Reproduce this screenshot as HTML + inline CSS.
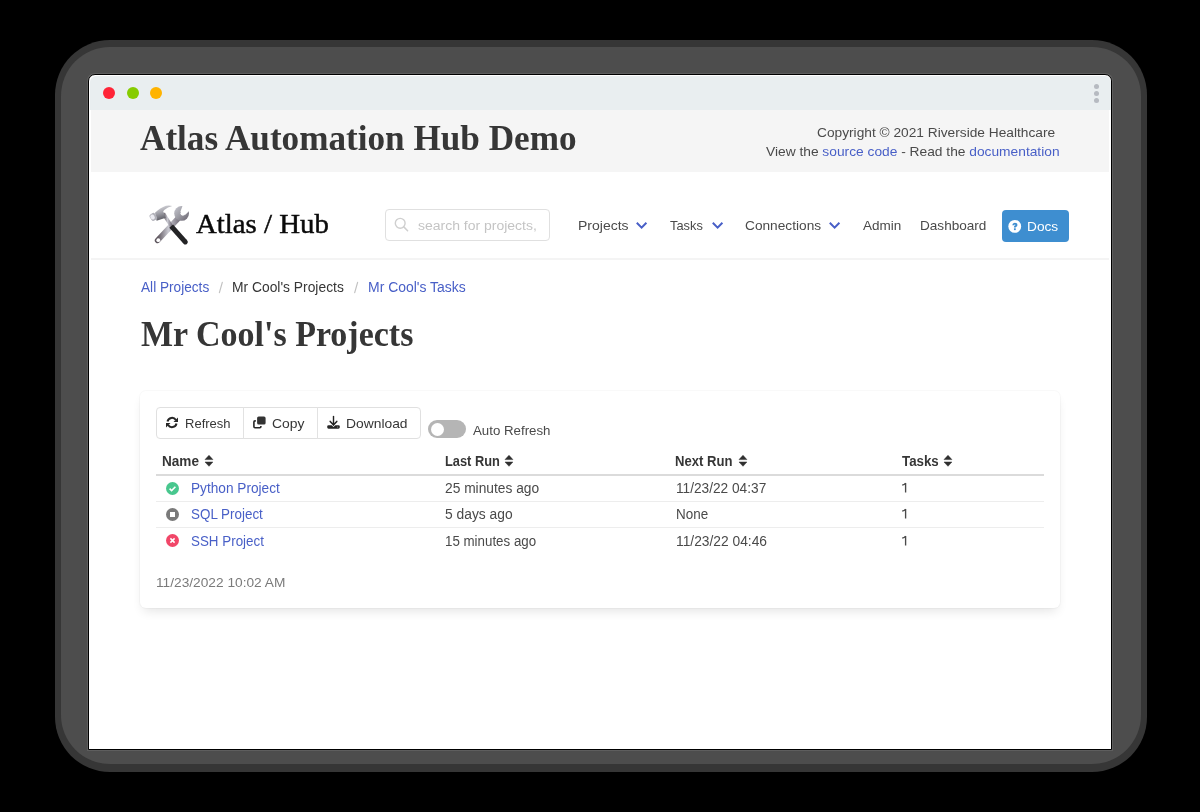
<!DOCTYPE html>
<html><head><meta charset="utf-8">
<style>
*{box-sizing:border-box;margin:0;padding:0}
html,body{width:1200px;height:812px;background:#000;overflow:hidden;font-family:"Liberation Sans",sans-serif;color:#4a4a4a}
.t{position:absolute;white-space:nowrap;transform-origin:0 0}
.b{position:absolute}
a{color:#485fc7;text-decoration:none}
#shadow{position:absolute;left:55px;top:40px;width:1092px;height:732px;border-radius:55px;background:#363636}
#shadow2{position:absolute;left:61px;top:47px;width:1080px;height:717px;border-radius:49px;background:#4d4d4d}
#win{position:absolute;left:88px;top:74px;width:1024px;height:676px;border:1px solid #000;border-radius:7px 7px 0 0;background:#fff;overflow:hidden;box-shadow:0 0 0 1px #5e5e5e}
#titlebar{position:absolute;left:1px;top:1px;width:1021px;height:34px;background:#e9eef0;border-radius:6px 6px 0 0}
.dot{position:absolute;width:12px;height:12px;border-radius:50%}
.vdot{position:absolute;width:5px;height:5px;border-radius:50%;background:#b6bac1;left:1004px}
#hdr{position:absolute;left:2px;top:35px;width:1018px;height:62px;background:#f5f5f5}
</style></head>
<body>
<div id="shadow"></div><div id="shadow2"></div>
<div id="win">
  <div id="titlebar">
    <div class="dot" style="left:13px;top:11px;background:#ff2437"></div>
    <div class="dot" style="left:36.5px;top:11px;background:#86cc00"></div>
    <div class="dot" style="left:60.3px;top:11px;background:#ffb300"></div>
    <div class="vdot" style="top:8px"></div>
    <div class="vdot" style="top:15px"></div>
    <div class="vdot" style="top:22px"></div>
  </div>
  <div id="hdr"></div>
</div>

<!-- logo emoji -->
<svg id="emoji" class="b" style="left:148px;top:202px" width="44" height="44" viewBox="0 0 44 44">
<defs>
<linearGradient id="gm" x1="0" y1="0" x2="0.3" y2="1"><stop offset="0" stop-color="#e2e2e6"/><stop offset=".5" stop-color="#a4a4ac"/><stop offset="1" stop-color="#585860"/></linearGradient>
<linearGradient id="gw" x1="0" y1="0" x2="1" y2="1"><stop offset="0" stop-color="#c8c8d0"/><stop offset=".5" stop-color="#9c9ca4"/><stop offset="1" stop-color="#66606c"/></linearGradient>
<linearGradient id="gh" x1="0" y1="0" x2="1" y2="0"><stop offset="0" stop-color="#5e565e"/><stop offset=".5" stop-color="#c8c8d0"/><stop offset="1" stop-color="#7a7480"/></linearGradient>
<mask id="jaw"><rect width="44" height="44" fill="#fff"/><path d="M32.4 9.8 L35.2 2 L44 6 L37.4 12.8 Z" fill="#000"/><circle cx="34.9" cy="11.3" r="2.4" fill="#000"/></mask>
</defs>
<g mask="url(#jaw)">
<path d="M9.6 38.4 L31 15.5" stroke="url(#gh)" stroke-width="5.6" stroke-linecap="round"/>
<circle cx="33.6" cy="11.4" r="7.4" fill="url(#gw)"/>
</g>
<circle cx="10.3" cy="38.2" r="1.9" fill="#fff"/>
<path d="M15.4 11.5 L23.6 24.6" stroke="url(#gh)" stroke-width="3.6"/>
<path d="M23.2 24.1 L37.2 39.8" stroke="#232325" stroke-width="5"/>
<path d="M37.2 39.8 L37.3 39.9" stroke="#232325" stroke-width="5" stroke-linecap="round"/>
<path d="M7 10.8 Q12 5.6 18 3.7 Q21.5 2.9 24.2 4.1 Q19.6 5.3 16.6 7.8 L15.2 9.2 L17.8 15.8 L8.6 18.8 Z" fill="url(#gm)"/>
<g transform="rotate(-33 5.3 14.9)"><rect x="2.2" y="11.2" width="6.2" height="7.4" rx="2" fill="#b0b0b8"/><ellipse cx="4.6" cy="14.6" rx="2.1" ry="2.6" fill="#ececf2"/></g>
</svg>

<div id="search" class="b" style="left:385px;top:209px;width:165px;height:32px;border:1px solid #e0e0e0;border-radius:4px"></div>
<svg class="b" style="left:394px;top:217px" width="16" height="16" viewBox="0 0 16 16"><circle cx="6.2" cy="6.3" r="4.9" fill="none" stroke="#cfcfcf" stroke-width="1.4"/><path d="M9.8 9.9 L13.6 13.7" stroke="#cfcfcf" stroke-width="1.5" stroke-linecap="round"/></svg>

<svg class="b" style="left:636px;top:222px" width="12" height="8" viewBox="0 0 12 8"><path d="M1.5 1.5 L5.6 5.6 L9.7 1.5" fill="none" stroke="#485fc7" stroke-width="2" stroke-linecap="square"/></svg>
<svg class="b" style="left:712px;top:222px" width="12" height="8" viewBox="0 0 12 8"><path d="M1.5 1.5 L5.6 5.6 L9.7 1.5" fill="none" stroke="#485fc7" stroke-width="2" stroke-linecap="square"/></svg>
<svg class="b" style="left:829px;top:222px" width="12" height="8" viewBox="0 0 12 8"><path d="M1.5 1.5 L5.6 5.6 L9.7 1.5" fill="none" stroke="#485fc7" stroke-width="2" stroke-linecap="square"/></svg>

<div id="docs" class="b" style="left:1002px;top:210px;width:67px;height:32px;background:#3e8ed0;border-radius:4px"></div>
<svg class="b" style="left:1008px;top:220px" width="14" height="14" viewBox="0 0 14 14"><circle cx="6.75" cy="6.4" r="6.4" fill="#fff"/><path d="M5.2 5.3 Q5.3 3.6 6.85 3.6 Q8.5 3.6 8.5 4.9 Q8.5 5.7 7.6 6.1 Q6.85 6.5 6.85 7.4" fill="none" stroke="#3e8ed0" stroke-width="1.9"/><rect x="5.95" y="8.3" width="1.8" height="1.8" fill="#3e8ed0"/></svg>

<div id="navline" class="b" style="left:91px;top:258px;width:1018px;height:2px;background:#f4f4f4"></div>

<div id="card" class="b" style="left:140px;top:391px;width:920px;height:217px;background:#fff;border-radius:6px;box-shadow:0 6px 11px -3px rgba(10,10,10,.11),0 0 0 1px rgba(10,10,10,.025)"></div>

<!-- button group -->
<div class="b" style="left:156px;top:407px;width:265px;height:32px;border:1px solid #e0e0e0;border-radius:4px"></div>
<div class="b" style="left:243px;top:407px;width:1px;height:32px;background:#e2e2e2"></div>
<div class="b" style="left:317px;top:407px;width:1px;height:32px;background:#e2e2e2"></div>

<!-- toggle -->
<div class="b" style="left:428px;top:420px;width:38px;height:18px;border-radius:9px;background:#b5b5b5"></div>
<div class="b" style="left:430.5px;top:422.5px;width:13px;height:13px;border-radius:50%;background:#fff"></div>

<!-- table lines -->
<div class="b" style="left:156px;top:474px;width:888px;height:2px;background:#dbdbdb"></div>
<div class="b" style="left:156px;top:501px;width:888px;height:1px;background:#ededed"></div>
<div class="b" style="left:156px;top:527px;width:888px;height:1px;background:#ededed"></div>

<!-- status icons -->
<svg class="b" style="left:165px;top:481px" width="15" height="15" viewBox="0 0 15 15"><circle cx="7.5" cy="7.5" r="6.5" fill="#48c78e"/><path d="M4.6 7.7 L6.6 9.6 L10.4 5.8" fill="none" stroke="#fff" stroke-width="1.6"/></svg>
<svg class="b" style="left:165px;top:507px" width="15" height="15" viewBox="0 0 15 15"><circle cx="7.5" cy="7.5" r="6.5" fill="#7a7a7a"/><rect x="5" y="5" width="5" height="5" fill="#fff"/></svg>
<svg class="b" style="left:165px;top:533px" width="15" height="15" viewBox="0 0 15 15"><circle cx="7.5" cy="7.5" r="6.5" fill="#f14668"/><path d="M5.4 5.4 L9.6 9.6 M9.6 5.4 L5.4 9.6" stroke="#fff" stroke-width="1.5"/></svg>


<!-- breadcrumb separators -->
<svg class="b" style="left:214px;top:278px" width="14" height="18" viewBox="0 0 14 18"><path d="M8.3 4.3 L5.4 14.7" stroke="#c2c2c2" stroke-width="1.2" stroke-linecap="round"/></svg>
<svg class="b" style="left:350px;top:278px" width="14" height="18" viewBox="0 0 14 18"><path d="M7.6 4.3 L4.7 14.7" stroke="#c2c2c2" stroke-width="1.2" stroke-linecap="round"/></svg>

<!-- button icons -->
<svg class="b" style="left:164px;top:415px" width="16" height="16" viewBox="0 0 16 16"><g fill="none" stroke="#262626" stroke-width="2"><path d="M3.5 6.5 A4.6 4.6 0 0 1 11.9 5.0"/><path d="M12.5 8.5 A4.6 4.6 0 0 1 4.1 10.0"/></g><path d="M14 2.6 V7.1 H9.5 Z" fill="#262626"/><path d="M2 7.9 H6.5 L2 12.4 Z" fill="#262626"/></svg>
<svg class="b" style="left:251px;top:414px" width="16" height="16" viewBox="0 0 16 16"><rect x="6.1" y="2.4" width="8.5" height="8.2" rx="1.6" fill="#333"/><path d="M4.8 6.9 H4 Q2.9 6.9 2.9 8 V12.6 Q2.9 13.7 4 13.7 H8.8 Q9.9 13.7 9.9 12.6 V12.1" fill="none" stroke="#262626" stroke-width="1.6"/></svg>
<svg class="b" style="left:325px;top:414px" width="16" height="16" viewBox="0 0 16 16"><path d="M8.5 2.4 V11" stroke="#222" stroke-width="1.4" stroke-linecap="round"/><path d="M5.2 7.4 L8.5 10.8 L11.8 7.4" fill="none" stroke="#222" stroke-width="1.5" stroke-linecap="round"/><path d="M2.2 12.6 Q2.2 11.2 3.6 11.2 H6.7 L8.5 12.9 L10.3 11.2 H13.4 Q14.8 11.2 14.8 12.6 V13.3 Q14.8 14.7 13.4 14.7 H3.6 Q2.2 14.7 2.2 13.3 Z" fill="#262626"/><circle cx="12.6" cy="13" r="0.6" fill="#999"/></svg>

<!-- sort icons -->
<svg class="b" style="left:202px;top:453px" width="14" height="16" viewBox="0 0 14 16"><path d="M7 2.3 L10.9 6.6 H3 Z M3 9 H10.9 L7 13.3 Z" fill="#2f2f2f" stroke="#2f2f2f" stroke-width=".5" stroke-linejoin="round"/></svg>
<svg class="b" style="left:502px;top:453px" width="14" height="16" viewBox="0 0 14 16"><path d="M7 2.3 L10.9 6.6 H3 Z M3 9 H10.9 L7 13.3 Z" fill="#2f2f2f" stroke="#2f2f2f" stroke-width=".5" stroke-linejoin="round"/></svg>
<svg class="b" style="left:735.8px;top:453px" width="14" height="16" viewBox="0 0 14 16"><path d="M7 2.3 L10.9 6.6 H3 Z M3 9 H10.9 L7 13.3 Z" fill="#2f2f2f" stroke="#2f2f2f" stroke-width=".5" stroke-linejoin="round"/></svg>
<svg class="b" style="left:941px;top:453px" width="14" height="16" viewBox="0 0 14 16"><path d="M7 2.3 L10.9 6.6 H3 Z M3 9 H10.9 L7 13.3 Z" fill="#2f2f2f" stroke="#2f2f2f" stroke-width=".5" stroke-linejoin="round"/></svg>
<svg class="b" style="left:900px;top:482px" width="10" height="12" viewBox="0 0 10 12"><path d="M5.6 1.1 V10.6 M2.2 3.2 Q4.4 2.6 5.6 1.1" fill="none" stroke="#4a4a4a" stroke-width="1.35"/></svg>
<svg class="b" style="left:900px;top:508px" width="10" height="12" viewBox="0 0 10 12"><path d="M5.6 1.1 V10.6 M2.2 3.2 Q4.4 2.6 5.6 1.1" fill="none" stroke="#4a4a4a" stroke-width="1.35"/></svg>
<svg class="b" style="left:900px;top:535px" width="10" height="12" viewBox="0 0 10 12"><path d="M5.6 1.1 V10.6 M2.2 3.2 Q4.4 2.6 5.6 1.1" fill="none" stroke="#4a4a4a" stroke-width="1.35"/></svg>
<div id="t1" class="t" style="left:140.20px;top:121.00px;font:bold 35.520px/1 'Liberation Serif';color:#363636;transform:scaleX(0.9898)">Atlas Automation Hub Demo</div>
<div id="cp" class="t" style="left:816.80px;top:126.00px;font:normal 13.663px/1 'Liberation Sans';color:#4a4a4a;transform:scaleX(1.0045)">Copyright © 2021 Riverside Healthcare</div>
<div id="vs" class="t" style="left:766.10px;top:145.00px;font:normal 13.372px/1 'Liberation Sans';color:#4a4a4a;transform:scaleX(1.0302)">View the <a>source code</a> - Read the <a>documentation</a></div>
<div id="logo" class="t" style="left:196.00px;top:210.00px;font:normal 27.600px/1 'Liberation Serif';color:#0a0a0a;transform:scaleX(1.0440);-webkit-text-stroke:0.45px #0a0a0a">Atlas / Hub</div>
<div id="ph" class="t" style="left:417.60px;top:219.00px;font:normal 13.663px/1 'Liberation Sans';color:#c4c4c4;transform:scaleX(1.0233)">search for projects,</div>
<div id="n1" class="t" style="left:577.66px;top:219.00px;font:normal 13.517px/1 'Liberation Sans';color:#4a4a4a;transform:scaleX(1.0375)">Projects</div>
<div id="n2" class="t" style="left:670.30px;top:219.00px;font:normal 13.517px/1 'Liberation Sans';color:#4a4a4a;transform:scaleX(0.9503)">Tasks</div>
<div id="n3" class="t" style="left:744.80px;top:219.00px;font:normal 13.517px/1 'Liberation Sans';color:#4a4a4a;transform:scaleX(1.0139)">Connections</div>
<div id="n4" class="t" style="left:862.70px;top:219.00px;font:normal 13.517px/1 'Liberation Sans';color:#4a4a4a;transform:scaleX(1.0011)">Admin</div>
<div id="n5" class="t" style="left:919.59px;top:219.00px;font:normal 13.517px/1 'Liberation Sans';color:#4a4a4a;transform:scaleX(1.0057)">Dashboard</div>
<div id="docst" class="t" style="left:1027.25px;top:220.00px;font:normal 13.081px/1 'Liberation Sans';color:#ffffff;transform:scaleX(1.0472)">Docs</div>
<div id="bc1" class="t" style="left:140.70px;top:280.00px;font:normal 14.099px/1 'Liberation Sans';color:#485fc7;transform:scaleX(0.9691)">All Projects</div>
<div id="bc2" class="t" style="left:232.42px;top:280.00px;font:normal 14.099px/1 'Liberation Sans';color:#363636;transform:scaleX(0.9828)">Mr Cool's Projects</div>
<div id="bc3" class="t" style="left:368.01px;top:280.00px;font:normal 14.099px/1 'Liberation Sans';color:#485fc7;transform:scaleX(0.9913)">Mr Cool's Tasks</div>
<div id="t2" class="t" style="left:140.75px;top:317.00px;font:bold 35.200px/1 'Liberation Serif';color:#363636;transform:scaleX(0.9656)">Mr Cool's Projects</div>
<div id="b1" class="t" style="left:185.04px;top:417.00px;font:normal 13.517px/1 'Liberation Sans';color:#363636;transform:scaleX(0.9637)">Refresh</div>
<div id="b2" class="t" style="left:272.10px;top:417.00px;font:normal 13.517px/1 'Liberation Sans';color:#363636;transform:scaleX(1.0280)">Copy</div>
<div id="b3" class="t" style="left:345.97px;top:417.00px;font:normal 13.517px/1 'Liberation Sans';color:#363636;transform:scaleX(1.0251)">Download</div>
<div id="ar" class="t" style="left:473.00px;top:424.00px;font:normal 13.081px/1 'Liberation Sans';color:#4a4a4a;transform:scaleX(1.0150)">Auto Refresh</div>
<div id="h1" class="t" style="left:161.80px;top:455.00px;font:bold 13.808px/1 'Liberation Sans';color:#363636;transform:scaleX(0.9834)">Name</div>
<div id="h2" class="t" style="left:444.60px;top:455.00px;font:bold 13.808px/1 'Liberation Sans';color:#363636;transform:scaleX(0.9289)">Last Run</div>
<div id="h3" class="t" style="left:675.00px;top:455.00px;font:bold 13.808px/1 'Liberation Sans';color:#363636;transform:scaleX(0.9483)">Next Run</div>
<div id="h4" class="t" style="left:902.00px;top:455.00px;font:bold 13.808px/1 'Liberation Sans';color:#363636;transform:scaleX(0.9637)">Tasks</div>
<div id="r1a" class="t" style="left:191.12px;top:482.00px;font:normal 13.953px/1 'Liberation Sans';color:#485fc7;transform:scaleX(0.9792)">Python Project</div>
<div id="r1b" class="t" style="left:444.60px;top:482.00px;font:normal 13.953px/1 'Liberation Sans';color:#4a4a4a;transform:scaleX(0.9883)">25 minutes ago</div>
<div id="r1c" class="t" style="left:675.52px;top:482.00px;font:normal 13.953px/1 'Liberation Sans';color:#4a4a4a;transform:scaleX(0.9812)">11/23/22 04:37</div>
<div id="r2a" class="t" style="left:190.80px;top:508.00px;font:normal 13.953px/1 'Liberation Sans';color:#485fc7;transform:scaleX(0.9625)">SQL Project</div>
<div id="r2b" class="t" style="left:444.60px;top:508.00px;font:normal 13.953px/1 'Liberation Sans';color:#4a4a4a;transform:scaleX(0.9911)">5 days ago</div>
<div id="r2c" class="t" style="left:675.54px;top:508.00px;font:normal 13.953px/1 'Liberation Sans';color:#4a4a4a;transform:scaleX(0.9646)">None</div>
<div id="r3a" class="t" style="left:190.80px;top:535.00px;font:normal 13.953px/1 'Liberation Sans';color:#485fc7;transform:scaleX(0.9605)">SSH Project</div>
<div id="r3b" class="t" style="left:444.84px;top:535.00px;font:normal 13.953px/1 'Liberation Sans';color:#4a4a4a;transform:scaleX(0.9561)">15 minutes ago</div>
<div id="r3c" class="t" style="left:675.51px;top:535.00px;font:normal 13.953px/1 'Liberation Sans';color:#4a4a4a;transform:scaleX(0.9900)">11/23/22 04:46</div>
<div id="ts" class="t" style="left:155.95px;top:576.00px;font:normal 13.081px/1 'Liberation Sans';color:#7a7a7a;transform:scaleX(1.0483)">11/23/2022 10:02 AM</div>
</body></html>
